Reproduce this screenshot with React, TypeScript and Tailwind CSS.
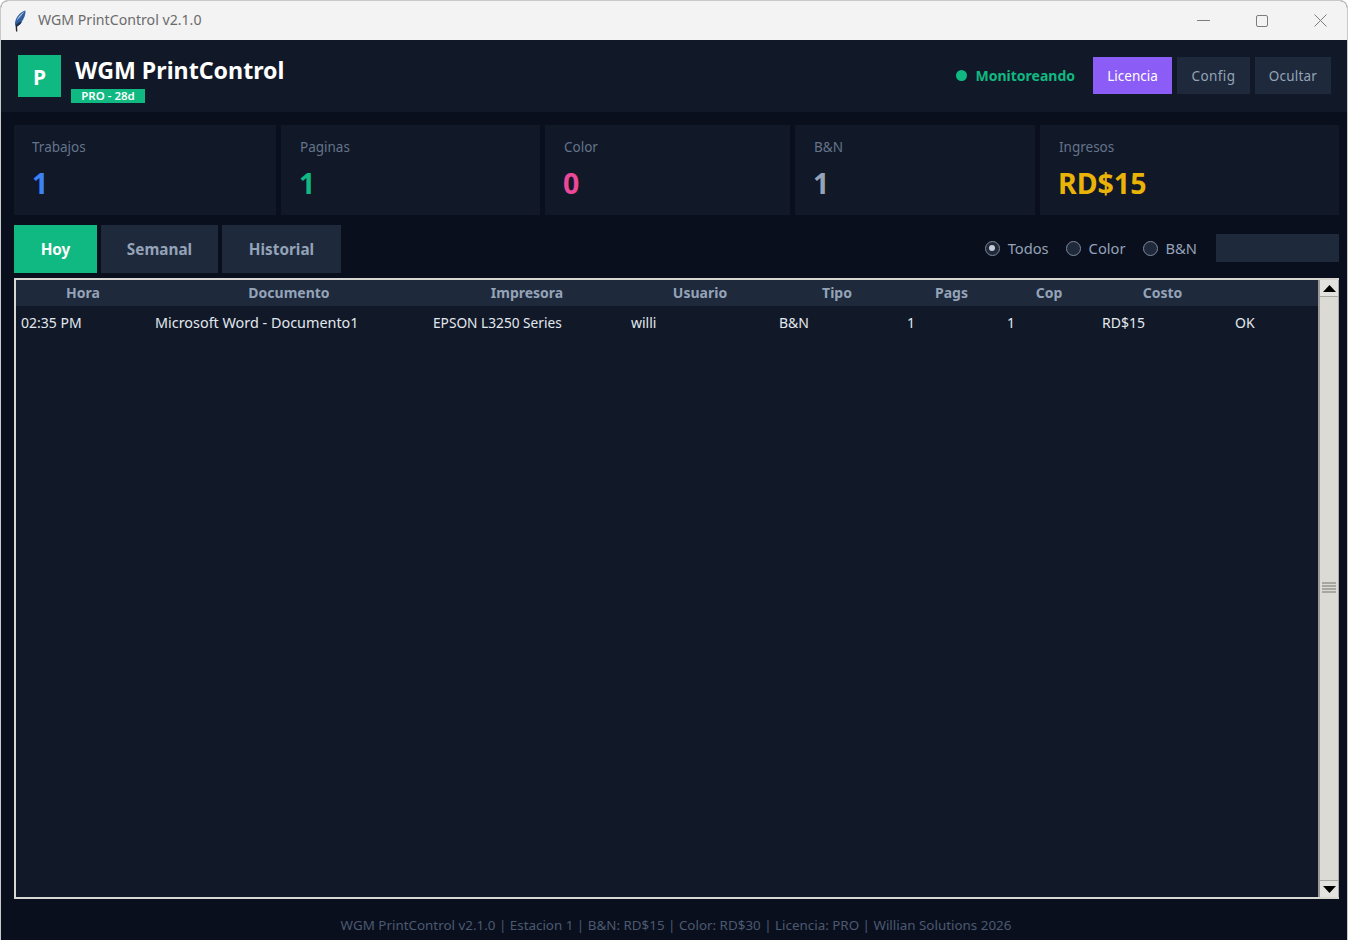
import React from "react";

const stats = [
  { label: "Trabajos", value: "1", width: "w-[262px]", color: "text-[#3b82f6]", nudge: "ml-0" },
  { label: "Paginas", value: "1", width: "w-[259px]", color: "text-[#10b981]", nudge: "-ml-[1px]" },
  { label: "Color", value: "0", width: "w-[245px]", color: "text-[#ec4899]", nudge: "-ml-[1px]" },
  { label: "B&N", value: "1", width: "w-[240px]", color: "text-[#94a3b8]", nudge: "-ml-[1px]" },
  { label: "Ingresos", value: "RD$15", width: "w-[299px]", color: "text-[#eab308]", nudge: "-ml-[1px]" },
];

const cols = [
  { head: "Hora", cell: "02:35 PM", cls: "pl-[5px]" },
  { head: "Documento", cell: "Microsoft Word - Documento1", cls: "pl-[5px] text-[14.4px]" },
  { head: "Impresora", cell: "EPSON L3250 Series", cls: "pl-[5px] pt-[1px] text-[13.7px]" },
  { head: "Usuario", cell: "willi", cls: "pl-[5px]" },
  { head: "Tipo", cell: "B&N", cls: "pl-[5px]" },
  { head: "Pags", cell: "1", cls: "pl-[7px]" },
  { head: "Cop", cell: "1", cls: "pl-[4px]" },
  { head: "Costo", cell: "RD$15", cls: "pl-[7px]" },
  { head: "", cell: "OK", cls: "pl-[5px]" },
];

const grid = "grid grid-cols-[134px_278px_198px_148px_126px_103px_92px_135px_1fr]";

function Feather() {
  return (
    <svg width="13" height="22" viewBox="0 0 13 22" aria-hidden="true">
      <path d="M11.500.5C7.500 1.500 3 5.500 1.500 10.500c-.7 2.500-.6 4.500.2 6 2.300-.2 4.300-1.500 6-4.500C10 8.500 11.800 4.500 11.500.5z" fill="#2f5f9e" />
      <path d="M10.500 1.500C7.500 3 4 6.500 2.500 11c2-2.500 5.500-6 8-9.500z" fill="#b9cbe4" />
      <path d="M7.700 12c-1.700 3-3.700 4.300-6 4.500.6-3 3.500-5 6-4.500z" fill="#1d2f4d" />
      <path d="M2.600 14.500C2.300 17 2.400 19 2.700 21.500" stroke="#26282c" strokeWidth="1.400" fill="none" />
    </svg>
  );
}

function Radio({ label, checked }: { label: string; checked?: boolean }) {
  return (
    <div className="flex items-center gap-[8px]">
      <span className="flex h-[15px] w-[15px] items-center justify-center rounded-full border border-[#7f8896] bg-[#1e293b]">
        {checked && <span className="h-[6px] w-[6px] rounded-full bg-[#c6ccd6]" />}
      </span>
      <span className="text-[14.7px] leading-5 text-[#94a3b8]">{label}</span>
    </div>
  );
}

function Arrow({ up }: { up?: boolean }) {
  return (
    <div
      className={`flex h-[17px] items-center justify-center bg-[#e4e2de] ${
        up ? "border-b border-[#a9a7a2]" : "border-t border-[#a9a7a2]"
      }`}
    >
      <svg width="13" height="7" viewBox="0 0 13 7" aria-hidden="true">
        <path d={up ? "M6.500 0 13 7H0z" : "M0 0H13L6.500 7z"} fill="#000" />
      </svg>
    </div>
  );
}

export default function App() {
  return (
    <div
      className="flex h-[940px] w-[1348px] flex-col overflow-hidden rounded-t-lg border border-b-0 border-[#c9c9c9] bg-[#0a0f1e]"
      style={{ fontFamily: '"Noto Sans", "Open Sans", sans-serif' }}
    >
      <div className="flex h-[39px] shrink-0 items-center bg-[#f3f3f3] pl-[13px]">
        <Feather />
        <span className="ml-[11px] pb-[1px] text-[14.15px] leading-5 text-[#6b6b6b]">WGM PrintControl v2.1.0</span>
        <div className="ml-auto flex items-center gap-[46px] pr-[20px]">
          <span className="h-px w-[13px] bg-[#7d7d7d]" />
          <span className="h-[12px] w-[12px] rounded-[2px] border border-[#7d7d7d]" />
          <svg width="13" height="13" viewBox="0 0 13 13" aria-hidden="true">
            <path d="M.5.5l12 12M12.500.5l-12 12" stroke="#7d7d7d" strokeWidth="1" />
          </svg>
        </div>
      </div>

      <header className="flex h-[72px] shrink-0 items-start bg-[#111827] pl-[17px] pr-[16px]">
        <div className="mt-[15px] flex h-[42px] w-[43px] items-center justify-center bg-[#10b981] pt-[3px] text-[21px] font-bold text-white">
          P
        </div>
        <div className="ml-[10px] flex flex-col items-start">
          <span className="ml-[4px] mt-[13px] text-[23.2px] font-bold leading-[34px] text-white">WGM PrintControl</span>
          <span className="mt-[2px] flex h-[14px] w-[74px] items-center justify-center bg-[#10b981] text-[11.5px] font-semibold leading-none text-white">
            PRO - 28d
          </span>
        </div>
        <div className="ml-auto mt-[17px] flex items-center">
          <span className="h-[11px] w-[11px] rounded-full bg-[#10b981]" />
          <span className="ml-[9px] mr-[18px] text-[14px] font-bold text-[#10b981]">Monitoreando</span>
          <div className="flex gap-[5px] text-[13.5px]">
            <span className="flex h-[37px] w-[79px] items-center justify-center bg-[#8b5cf6] pt-[1px] text-white">Licencia</span>
            <span className="flex h-[37px] w-[73px] items-center justify-center bg-[#1e293b] pt-[1px] tracking-[0.4px] text-[#94a3b8]">Config</span>
            <span className="flex h-[37px] w-[76px] items-center justify-center bg-[#1e293b] pt-[1px] tracking-[0.2px] text-[#94a3b8]">Ocultar</span>
          </div>
        </div>
      </header>

      <section className="mt-[13px] flex h-[90px] shrink-0 gap-[5px] pl-[13px]">
        {stats.map((s) => (
          <div key={s.label} className={`${s.width} bg-[#111827] pl-[19px] pt-[12px] first:pl-[18px]`}>
            <div className="text-[13.5px] leading-5 text-[#64748b]">{s.label}</div>
            <div className={`mt-[8px] text-[28.5px] font-bold leading-[37px] ${s.nudge} ${s.color}`}>{s.value}</div>
          </div>
        ))}
      </section>

      <section className="mt-[10px] flex h-[48px] shrink-0 items-start pl-[13px] pr-[8px]">
        <div className="flex gap-[4px] text-[15.3px] font-bold">
          <span className="flex h-[48px] w-[83px] items-center justify-center bg-[#10b981] text-white">Hoy</span>
          <span className="flex h-[48px] w-[117px] items-center justify-center bg-[#1e293b] text-[#94a3b8]">Semanal</span>
          <span className="flex h-[48px] w-[119px] items-center justify-center bg-[#1e293b] text-[#94a3b8]">Historial</span>
        </div>
        <div className="ml-auto mt-[9px] flex items-center">
          <div className="flex gap-[17px]">
            <Radio label="Todos" checked />
            <Radio label="Color" />
            <Radio label="B&N" />
          </div>
          <div className="ml-[19px] h-[28px] w-[123px] bg-[#1e293b]" />
        </div>
      </section>

      <section className="mx-[13px] mt-[5px] flex h-[621px] w-[1325px] shrink-0 border-2 border-r-0 border-[#d9d7d2] bg-[#111827]">
        <div className="min-w-0 flex-1 border-r-2 border-[#9c9a96]">
          <div className={`${grid} h-[26px] items-center bg-[#1e293b] pb-[1px] text-center text-[14px] font-bold text-[#94a3b8]`}>
            {cols.map((c, i) => (
              <span key={i}>{c.head}</span>
            ))}
          </div>
          <div className={`${grid} h-[33px] items-center text-[14px] text-[#e2e8f0]`}>
            {cols.map((c, i) => (
              <span key={i} className={`whitespace-nowrap ${c.cls}`}>
                {c.cell}
              </span>
            ))}
          </div>
        </div>
        <div className="flex w-[19px] shrink-0 flex-col border-r border-[#a9a7a2] bg-[#dcdad5]">
          <Arrow up />
          <div className="flex flex-1 flex-col items-center justify-center gap-[1px] pb-[2px]">
            <span className="h-[2px] w-[14px] bg-[#a8a6a1]" />
            <span className="h-[2px] w-[14px] bg-[#a8a6a1]" />
            <span className="h-[2px] w-[14px] bg-[#a8a6a1]" />
            <span className="h-[2px] w-[14px] bg-[#a8a6a1]" />
          </div>
          <Arrow />
        </div>
      </section>

      <footer className="flex flex-1 items-start justify-center pl-[4px] pt-[16px] text-[13.4px] leading-5 text-[#4b5a70]">
        WGM PrintControl v2.1.0 | Estacion 1 | B&N: RD$15 | Color: RD$30 | Licencia: PRO | Willian Solutions 2026
      </footer>
    </div>
  );
}
